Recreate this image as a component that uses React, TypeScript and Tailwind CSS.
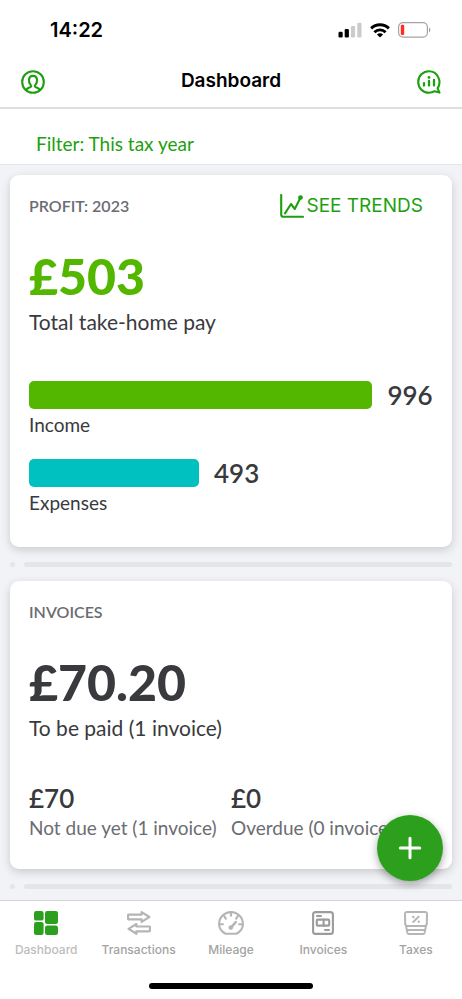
import { ReactNode, useState } from 'react';

const bars = [
  { label: 'Income', value: 996, color: 'bg-[#53b700]' },
  { label: 'Expenses', value: 493, color: 'bg-[#00c1bf]' },
];

const MAX_BAR_WIDTH = 85;

function SignalIcon() {
  return (
    <svg width="24" height="16" viewBox="0 0 24 16">
      <rect x="0.5" y="9.8" width="4.2" height="5.7" rx="1.3" fill="#000" />
      <rect x="6.7" y="7" width="4.2" height="8.5" rx="1.3" fill="#000" />
      <rect x="12.9" y="4" width="4.2" height="11.5" rx="1.3" fill="#cbcbcb" />
      <rect x="19.3" y="0.8" width="4.2" height="14.7" rx="1.3" fill="#cbcbcb" />
    </svg>
  );
}

function WifiIcon() {
  return (
    <svg width="20" height="15" viewBox="0 0 20 15" fill="none" stroke="#000" strokeWidth="2.9">
      <path d="M1.1 5.4C6 0.6 14 0.6 18.9 5.4" />
      <path d="M4.4 9.2C7.5 6.1 12.5 6.1 15.6 9.2" />
      <path d="M6.9 11.5C8.6 9.9 11.4 9.9 13.1 11.5L10 14.6z" fill="#000" stroke="none" />
    </svg>
  );
}

function BatteryIcon() {
  return (
    <svg width="33" height="16" viewBox="0 0 33 16" fill="none">
      <rect x="0.6" y="0.6" width="28.8" height="14.6" rx="4.4" stroke="#a3a3a3" strokeWidth="1.2" />
      <rect x="2.8" y="2.8" width="3.4" height="10.2" rx="1.2" fill="#ff2d22" />
      <path d="M31 5.4c1.8 0.7 1.8 4.2 0 4.9z" fill="#a3a3a3" />
    </svg>
  );
}

function ProfileIcon() {
  return (
    <svg width="24" height="24" viewBox="0 0 24 24" fill="none" stroke="#1e9f10" strokeWidth="2.1">
      <circle cx="12" cy="12" r="10.8" />
      <path d="M5.2 20.2c0.6-2.2 2.3-2.5 4.3-3.1 0.9-0.3 0.9-1.3 0.3-2C6.9 11.8 7.2 5.9 12 5.9s5.1 5.9 2.2 9.2c-0.6 0.7-0.6 1.7 0.3 2 2 0.6 3.7 0.9 4.3 3.1" />
    </svg>
  );
}

function ChatIcon() {
  return (
    <svg width="24" height="24" viewBox="0 0 24 24" fill="none" stroke="#1e9f10" strokeWidth="2.1" strokeLinecap="round" strokeLinejoin="round">
      <path d="M20.6 18.4C25.2 11.2 20.5 1.2 12 1.2 6 1.2 1.2 6 1.2 12S6 22.8 12 22.8c2.2 0 4-0.6 5.6-1.6l4.9 1.4z" />
      <path d="M7 13.2v2.4M12 11v4.6M17 10v5.6" strokeWidth="2.3" />
      <circle cx="12" cy="7.4" r="1.4" fill="#1e9f10" stroke="none" />
    </svg>
  );
}

function TrendIcon() {
  return (
    <svg width="24" height="24" viewBox="0 0 24 24" fill="none" stroke="#1e9f10" strokeWidth="2.1" strokeLinecap="round" strokeLinejoin="round">
      <path d="M1.2 1v19.5q0 2.3 2.3 2.3H23" />
      <path d="M5 19.4L11 10l3.8 5L20 4.5" />
      <circle cx="20.5" cy="3.6" r="2.4" fill="#1e9f10" stroke="none" />
    </svg>
  );
}

function DashboardIcon() {
  return (
    <svg width="24" height="24" viewBox="0 0 24 24" fill="#2ca01c">
      <rect x="0" y="0" width="9.6" height="9.6" rx="2.2" />
      <rect x="11" y="0" width="13" height="13" rx="2.2" />
      <rect x="0" y="11" width="9.6" height="13" rx="2.2" />
      <rect x="11" y="14.6" width="13" height="9.4" rx="2.2" />
    </svg>
  );
}

function TransactionsIcon() {
  return (
    <svg width="24" height="24" viewBox="0 0 24 24" fill="none" stroke="#b5b5b5" strokeWidth="2.2" strokeLinejoin="round">
      <path d="M1.8 3.6H14.6V1.1L22.4 6 14.6 10.9V8.4H1.8q-0.8 0-0.8-0.8V4.4q0-0.8 0.8-0.8z" />
      <path d="M22.2 15.5H9.4V13L1.6 17.9 9.4 22.8V20.3H22.2q0.8 0 0.8-0.8v-3.2q0-0.8-0.8-0.8z" />
    </svg>
  );
}

function MileageIcon() {
  return (
    <svg width="26" height="24" viewBox="0 0 26 24" fill="none" stroke="#b5b5b5" strokeWidth="2.1" strokeLinecap="round" strokeLinejoin="round">
      <path d="M7.6 22.7C3.7 20.9 1.1 17.3 1.1 13.1 1.1 6.4 6.4 1.1 13 1.1s11.9 5.3 11.9 12c0 4.2-2.6 7.8-6.5 9.6z" />
      <path d="M13 1.5v3.3M6.2 5.2l1.6 2.4M19.8 5.2l-1.6 2.4M1.5 13.2h3.4M24.5 13.2h-3.4" />
      <path d="M13.6 15.9l4.2-4.7" strokeWidth="2.5" />
      <circle cx="12.8" cy="16.6" r="2.3" fill="#b5b5b5" stroke="none" />
    </svg>
  );
}

function InvoicesIcon() {
  return (
    <svg width="22" height="24" viewBox="0 0 22 24" fill="none" stroke="#9c9c9c" strokeWidth="2.1" strokeLinecap="round">
      <rect x="1.1" y="1.1" width="19.8" height="21.8" rx="2.5" />
      <path d="M5 5h4M13 19h4" />
      <rect x="4.8" y="8.6" width="12.4" height="6" rx="0.8" />
      <path d="M11.6 8.6v6" />
    </svg>
  );
}

function TaxesIcon() {
  return (
    <svg width="24" height="24" viewBox="0 0 24 24" fill="none" stroke="#b5b5b5" strokeWidth="2" strokeLinecap="round" strokeLinejoin="round">
      <path d="M3 1.1H21q2.1 0 2 2.1L22.8 12.8q-0.1 2.3-2.2 2.3h-17.2q-2.1 0-2.2-2.3L1 3.2Q0.9 1.1 3 1.1z" />
      <path d="M2.1 15.4l0.7 3.5H21.2L21.9 15.4M2.8 18.9l0.5 2.5q0.4 1.6 2 1.6h13.4q1.6 0 2-1.6l0.5-2.5" />
      <path d="M9.3 11L14.6 5.6" />
      <circle cx="9.3" cy="6" r="1.2" fill="#b5b5b5" stroke="none" />
      <circle cx="14.7" cy="10.7" r="1.2" fill="#b5b5b5" stroke="none" />
    </svg>
  );
}

const tabs = [
  { name: 'Dashboard', icon: <DashboardIcon />, color: 'text-[#bcbcbc]' },
  { name: 'Transactions', icon: <TransactionsIcon />, color: 'text-[#a3a3a3]' },
  { name: 'Mileage', icon: <MileageIcon />, color: 'text-[#a3a3a3]' },
  { name: 'Invoices', icon: <InvoicesIcon />, color: 'text-[#a3a3a3]' },
  { name: 'Taxes', icon: <TaxesIcon />, color: 'text-[#a3a3a3]' },
];

function Card({ children }: { children: ReactNode }) {
  return (
    <section className="bg-white rounded-[9px] px-[19px] pt-[19px] shadow-[0_3px_10px_rgba(0,0,0,0.17)]">
      {children}
    </section>
  );
}

function Separator() {
  return (
    <div className="flex gap-[9px] pt-[15px] pb-[14px]">
      <div className="w-[5px] h-[5px] rounded-full bg-[#e3e5e8]"></div>
      <div className="flex-1 h-[5px] rounded-full bg-[#e3e5e8]"></div>
    </div>
  );
}

export default function App() {
  const [activeTab, setActiveTab] = useState('Dashboard');

  return (
    <div className="flex flex-col h-screen bg-white font-[Lato,sans-serif] text-[#393a3d]">
      {/* Status bar */}
      <div className="flex items-center justify-between h-[60px] pl-[50px] pr-[31px] font-[Inter,sans-serif]">
        <span className="text-xl font-semibold text-black">14:22</span>
        <div className="flex items-center gap-2">
          <SignalIcon />
          <WifiIcon />
          <BatteryIcon />
        </div>
      </div>

      {/* Header */}
      <header className="flex items-center justify-between h-[49px] px-[21px] pb-1 border-b-2 border-[#dedee0]">
        <button aria-label="Profile">
          <ProfileIcon />
        </button>
        <h1 className="font-[Inter,sans-serif] text-[19px] font-semibold text-black">Dashboard</h1>
        <button aria-label="Assistant">
          <ChatIcon />
        </button>
      </header>

      <div className="flex items-center h-14 px-9 pt-[14px] border-b border-[#e4e6ea]">
        <button className="text-[19px] leading-7 text-[#1e9f10]">Filter: This tax year</button>
      </div>

      <div className="relative flex-1 min-h-0">
        <main className="h-full overflow-y-auto bg-[#f2f3f7] px-2.5 pt-2.5">
          <Card>
            <div className="flex items-center justify-between h-6">
              <h2 className="text-base leading-6 font-semibold text-[#6b6c72]">PROFIT: 2023</h2>
              <button className="flex items-center gap-0.5 mr-2.5 font-[Inter,sans-serif] text-[19px] leading-6 text-[#1e9f10]">
                <TrendIcon />
                SEE TRENDS
              </button>
            </div>
            <p className="mt-[30px] text-[50px] leading-[56px] font-black text-[#53b700]">£503</p>
            <p className="mt-1 text-[21px] leading-7">Total take-home pay</p>
            <div className="flex flex-col gap-[22px] mt-[45px] pb-8">
              {bars.map((bar) => (
                <div key={bar.label}>
                  <div className="flex items-center gap-[15px]">
                    <div
                      className={`h-7 rounded-[5px] ${bar.color}`}
                      style={{ width: `${(bar.value / bars[0].value) * MAX_BAR_WIDTH}%` }}
                    ></div>
                    <span className="text-[26px] leading-7 font-semibold">{bar.value}</span>
                  </div>
                  <p className="mt-1 text-[19px] leading-6">{bar.label}</p>
                </div>
              ))}
            </div>
          </Card>

          <Separator />

          <Card>
            <h2 className="text-base leading-6 font-semibold text-[#6b6c72]">INVOICES</h2>
            <p className="mt-[30px] text-[50px] leading-[56px] font-black">£70.20</p>
            <p className="mt-1 text-[21px] leading-7">To be paid (1 invoice)</p>
            <div className="grid grid-cols-2 mt-10 pb-[27px]">
              <div>
                <p className="text-[26px] leading-8 font-semibold">£70</p>
                <p className="text-[19px] leading-7 whitespace-nowrap text-[#6b6c72]">Not due yet (1 invoice)</p>
              </div>
              <div>
                <p className="text-[26px] leading-8 font-semibold">£0</p>
                <p className="text-[19px] leading-7 whitespace-nowrap text-[#6b6c72]">Overdue (0 invoices)</p>
              </div>
            </div>
          </Card>

          <Separator />
        </main>

        {/* Add button */}
        <button
          className="absolute right-[19px] bottom-[19px] flex items-center justify-center w-[66px] h-[66px] rounded-full bg-[#2ca01c] shadow-[0_3px_8px_rgba(0,0,0,0.35)]"
          aria-label="Add"
        >
          <svg width="24" height="24" viewBox="0 0 24 24" stroke="#fff" strokeWidth="3" strokeLinecap="round">
            <path d="M12 2.3v19.4M2.3 12h19.4" />
          </svg>
        </button>
      </div>

      {/* Bottom tabs */}
      <nav className="border-t border-[#d4d6da] font-[Inter,sans-serif]">
        <div className="grid grid-cols-5 pt-2.5">
          {tabs.map((tab) => (
            <button
              key={tab.name}
              onClick={() => setActiveTab(tab.name)}
              aria-current={activeTab === tab.name ? 'page' : undefined}
              className={`flex flex-col items-center gap-[7px] text-xs font-medium ${tab.color}`}
            >
              {tab.icon}
              {tab.name}
            </button>
          ))}
        </div>
        <div className="w-[164px] h-[6px] mx-auto mt-[25px] mb-[10px] rounded-full bg-black"></div>
      </nav>
    </div>
  );
}
